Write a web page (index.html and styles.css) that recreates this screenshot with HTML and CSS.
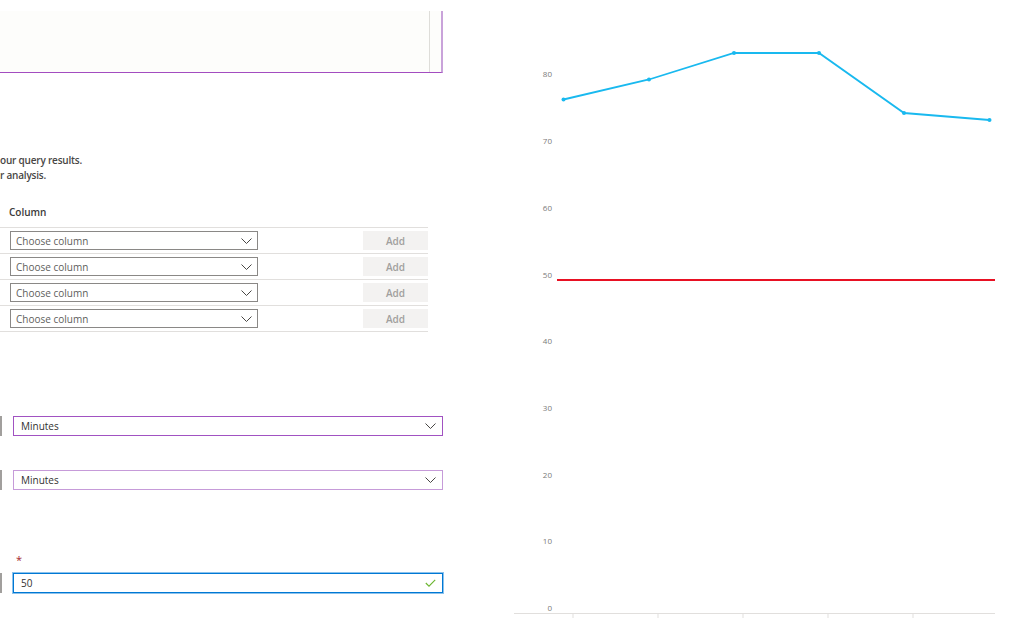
FILE: index.html
```html
<html lang="en">
<head>
  <meta charset="UTF-8">
  <meta name="viewport" content="width=device-width, initial-scale=1.0">
  <title>Alert rule logic</title>
  <link rel="stylesheet" href="styles.css">
</head>
<body>
  <div class="page">
    <section class="form-pane">
      <!-- query editor, scrolled off to the left -->
      <div class="query-box">
        <div class="query-scroll"></div>
      </div>

      <p class="hint">our query results.<br>r analysis.</p>

      <div class="col-head">Column</div>
      <div class="col-table">
        <div class="col-row">
          <div class="select small">
            <span>Choose column</span>
            <svg class="chev" width="11" height="6" viewBox="0 0 11 6"><path d="M0.5 0.5 L5.5 5.5 L10.5 0.5"/></svg>
          </div>
          <button class="add" disabled>Add</button>
        </div>
        <div class="col-row">
          <div class="select small">
            <span>Choose column</span>
            <svg class="chev" width="11" height="6" viewBox="0 0 11 6"><path d="M0.5 0.5 L5.5 5.5 L10.5 0.5"/></svg>
          </div>
          <button class="add" disabled>Add</button>
        </div>
        <div class="col-row">
          <div class="select small">
            <span>Choose column</span>
            <svg class="chev" width="11" height="6" viewBox="0 0 11 6"><path d="M0.5 0.5 L5.5 5.5 L10.5 0.5"/></svg>
          </div>
          <button class="add" disabled>Add</button>
        </div>
        <div class="col-row">
          <div class="select small">
            <span>Choose column</span>
            <svg class="chev" width="11" height="6" viewBox="0 0 11 6"><path d="M0.5 0.5 L5.5 5.5 L10.5 0.5"/></svg>
          </div>
          <button class="add" disabled>Add</button>
        </div>
      </div>

      <div class="field granularity">
        <span class="stub"></span>
        <div class="select wide strong">
          <span>Minutes</span>
          <svg class="chev" width="11" height="6" viewBox="0 0 11 6"><path d="M0.5 0.5 L5.5 5.5 L10.5 0.5"/></svg>
        </div>
      </div>

      <div class="field frequency">
        <span class="stub"></span>
        <div class="select wide soft">
          <span>Minutes</span>
          <svg class="chev" width="11" height="6" viewBox="0 0 11 6"><path d="M0.5 0.5 L5.5 5.5 L10.5 0.5"/></svg>
        </div>
      </div>

      <div class="req">*</div>
      <div class="field threshold">
        <span class="stub"></span>
        <div class="input valid">
          <span>50</span>
          <svg class="check" width="11" height="8" viewBox="0 0 11 8"><path d="M0.8 4 L4 7.2 L10.2 0.8"/></svg>
        </div>
      </div>
    </section>

    <section class="chart-pane">
      <svg class="chart" width="524" height="618" viewBox="0 0 524 618">
        <g class="ylabels">
          <text x="52" y="77">80</text>
          <text x="52" y="144">70</text>
          <text x="52" y="211">60</text>
          <text x="52" y="278">50</text>
          <text x="52" y="344">40</text>
          <text x="52" y="411">30</text>
          <text x="52" y="478">20</text>
          <text x="52" y="544">10</text>
          <text x="52" y="611">0</text>
        </g>
        <line class="axis" x1="14" y1="613.5" x2="495" y2="613.5"/>
        <g class="ticks">
          <line x1="73" y1="613" x2="73" y2="618"/>
          <line x1="158" y1="613" x2="158" y2="618"/>
          <line x1="243" y1="613" x2="243" y2="618"/>
          <line x1="328" y1="613" x2="328" y2="618"/>
          <line x1="413" y1="613" x2="413" y2="618"/>
        </g>
        <line class="threshold-line" x1="57" y1="280" x2="495" y2="280"/>
        <polyline class="series" points="63.5,99.5 149,79.5 234,53 319,53 404,113 489.5,120"/>
        <g class="dots">
          <circle cx="63.5" cy="99.5" r="2"/>
          <circle cx="149" cy="79.5" r="2"/>
          <circle cx="234" cy="53" r="2"/>
          <circle cx="319" cy="53" r="2"/>
          <circle cx="404" cy="113" r="2"/>
          <circle cx="489.5" cy="120" r="2"/>
        </g>
      </svg>
    </section>
  </div>
</body>
</html>
```

FILE: styles.css
```css
body {
  margin: 0;
  background-color: #fff;
  font-family: "Open Sans", "Noto Sans", sans-serif;
  font-size: 10px;
  color: #323130;
  overflow: hidden;
}

.page {
  display: flex;
  gap: 57px;
  height: 618px;
}

/* Left: form */
.form-pane {
  width: 443px;
  flex: none;
  padding-top: 11px;
}

.query-box {
  height: 62px;
  box-sizing: border-box;
  background-color: #fdfdfb;
  border-right: 2px solid #c9a3da;
  border-bottom: 1px solid #a34dc0;
  display: flex;
  justify-content: flex-end;
}

.query-scroll {
  width: 11px;
  border-left: 1px solid #deddd9;
}

.hint {
  margin: 80px 0 0;
  line-height: 15px;
  font-weight: 600;
  color: #484644;
  letter-spacing: -0.2px;
}

.col-head {
  margin-top: 22px;
  padding: 0 0 7px 9px;
  line-height: 15px;
  font-weight: 600;
  color: #3b3a39;
}

.col-table {
  width: 428px;
  border-bottom: 1px solid #e1dfdd;
}

.col-row {
  display: flex;
  align-items: center;
  padding: 3px 0;
  border-top: 1px solid #e1dfdd;
}

.select,
.input {
  height: 19px;
  box-sizing: border-box;
  display: flex;
  align-items: center;
  justify-content: space-between;
  background-color: #fff;
  border: 1px solid #8a8886;
}

.select.small {
  width: 248px;
  margin-left: 10px;
  padding: 0 5px 0 5px;
  color: #605e5c;
}

.chev path {
  fill: none;
  stroke: #484644;
  stroke-width: 1;
}

.add {
  margin-left: auto;
  width: 65px;
  height: 19px;
  padding: 0;
  border: none;
  background-color: #f3f2f1;
  color: #a19f9d;
  font-family: inherit;
  font-size: 10px;
  font-weight: 600;
}

.field {
  display: flex;
  align-items: center;
  gap: 11px;
}

.stub {
  width: 2px;
  height: 20px;
  background-color: #a19f9d;
}

.select.wide,
.input {
  flex: 1;
  height: 20px;
  padding: 0 6px 0 7px;
  color: #323130;
}

.select.strong {
  border-color: #a152c2;
}

.select.soft {
  border-color: #c69bd9;
}

.granularity {
  margin-top: 84px;
}

.frequency {
  margin-top: 34px;
}

.req {
  margin: 63px 0 0 16px;
  height: 14px;
  line-height: 14px;
  color: #a4262c;
  font-size: 11px;
}

.threshold {
  margin-top: 6px;
}

.input.valid {
  border-color: #0078d4;
  box-shadow: 0 0 0 1px rgba(0, 120, 212, 0.45);
}

.check path {
  fill: none;
  stroke: #6bb52f;
  stroke-width: 1.1;
}

/* Right: chart */
.chart-pane {
  width: 524px;
  flex: none;
}

.chart {
  display: block;
}

.ylabels text {
  font-family: "Open Sans", sans-serif;
  font-size: 8px;
  fill: #7a7a7a;
  text-anchor: end;
}

.axis,
.ticks line {
  stroke: #e1dfdd;
  stroke-width: 1;
}

.threshold-line {
  stroke: #e81123;
  stroke-width: 2;
}

.series {
  fill: none;
  stroke: #19b9ef;
  stroke-width: 1.8;
}

.dots circle {
  fill: #19b9ef;
}
```
